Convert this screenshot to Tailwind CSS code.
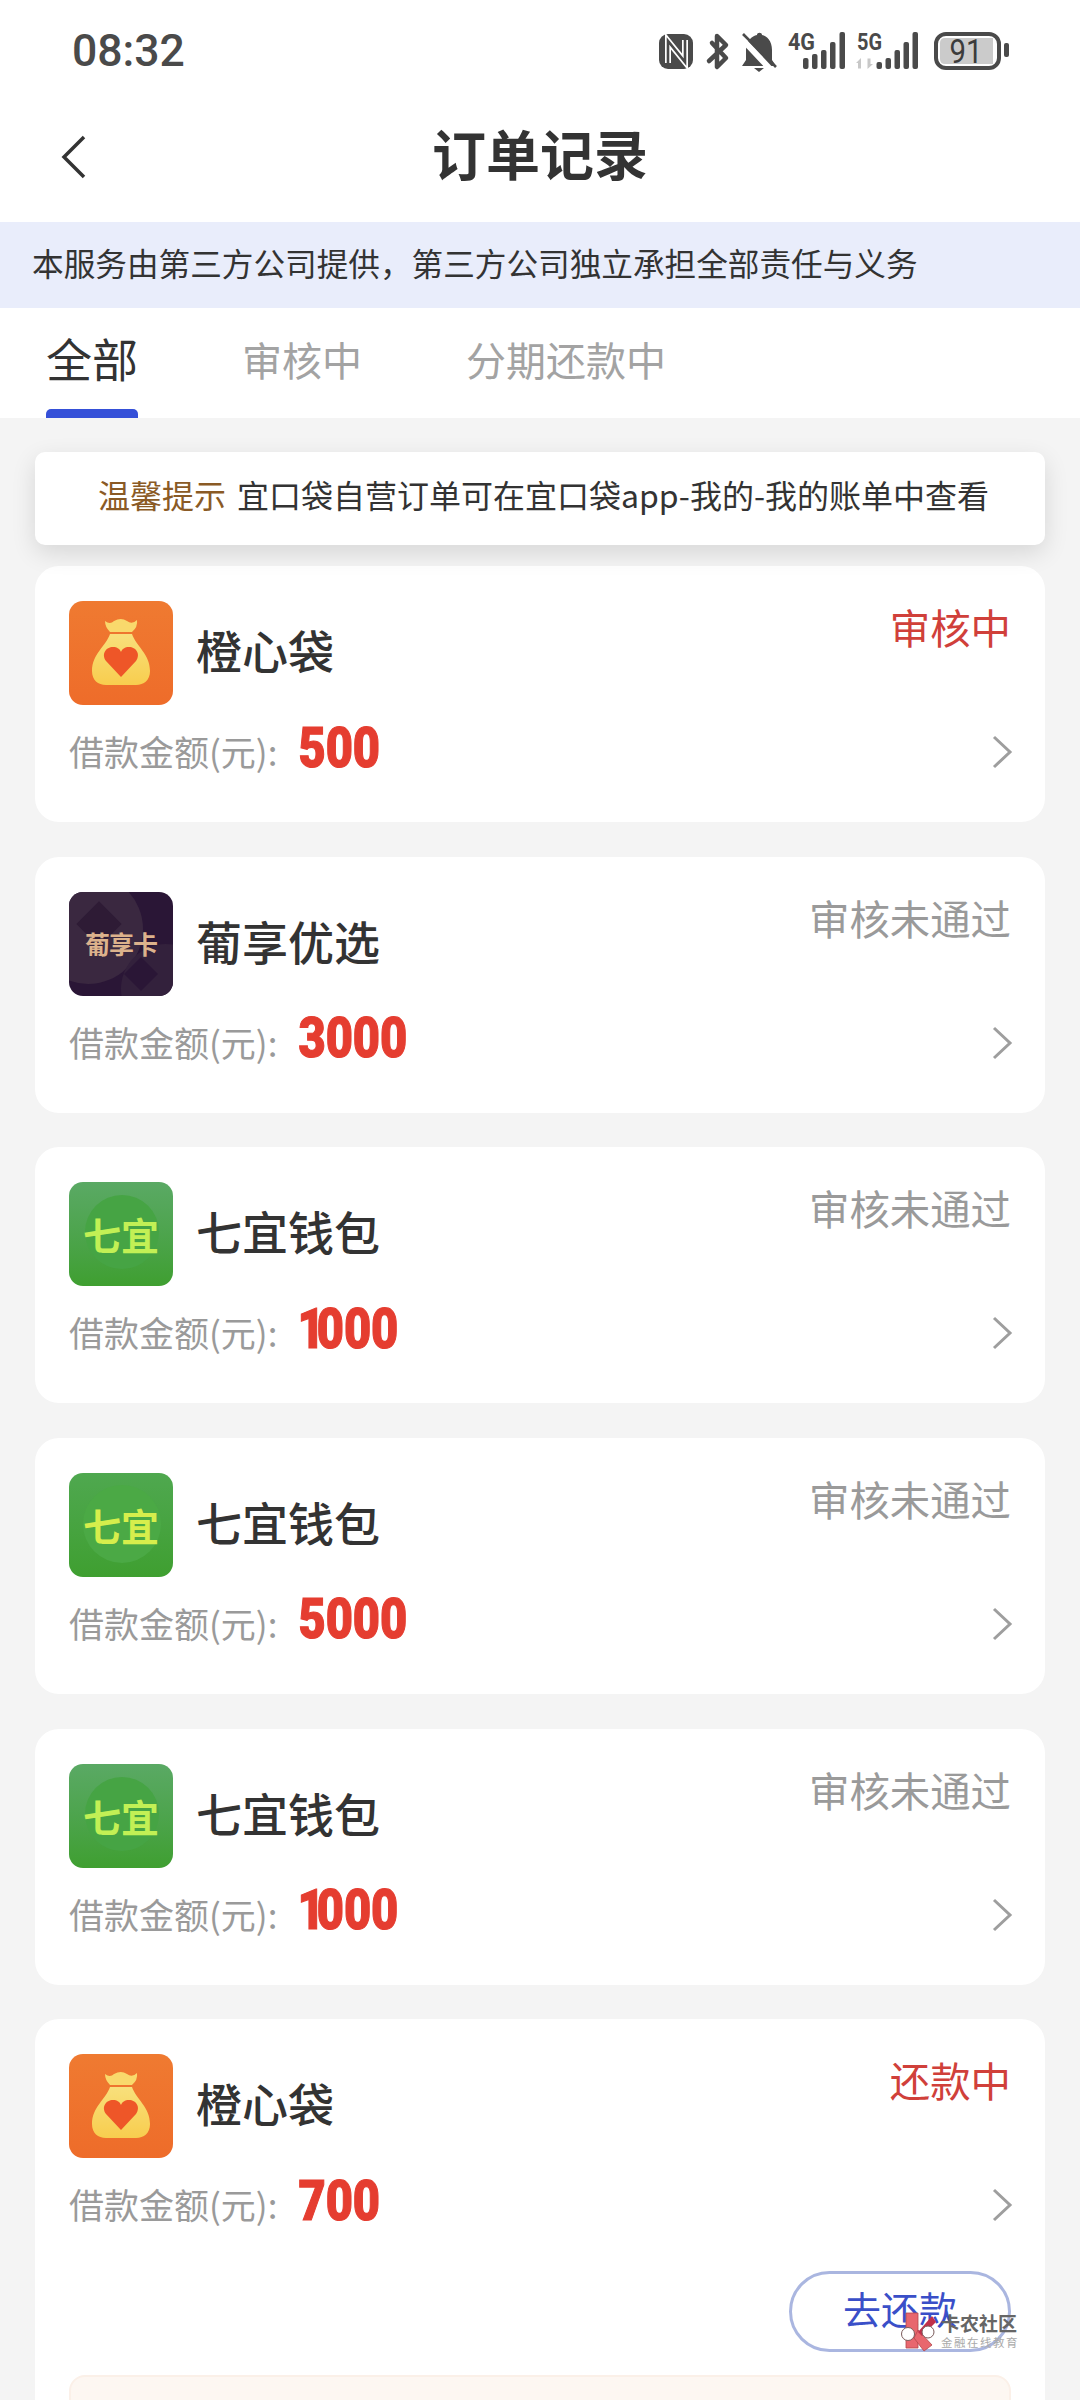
<!doctype html>
<html lang="zh">
<head>
<meta charset="utf-8">
<script src="https://cdn.jsdelivr.net/npm/@tailwindcss/browser@4"></script>
<title>订单记录</title>
</head>
<body class="m-0">
<div class="relative w-[1080px] h-[2400px] overflow-hidden bg-[#f4f4f4] font-['Noto_Sans_CJK_SC','Noto_Sans',sans-serif] text-[#333]">

  <!-- status bar -->
  <div class="h-[85px] bg-white flex justify-between items-start pl-[72px] pr-[67px] pt-[28px]">
    <span class="font-['Roboto',sans-serif] font-medium text-[44.5px] leading-[46px] text-[#4a4a4a]">08:32</span>
    <svg width="358" height="50" viewBox="655 28 358 50" class="block">
      <rect x="659" y="34" width="34" height="35" rx="9" fill="#4a4a4a"/>
      <path d="M668 63V41L685 62V40" fill="none" stroke="#fff" stroke-width="6"/>
      <path d="M668 63V41L685 62V40" fill="none" stroke="#4a4a4a" stroke-width="2.600"/>
      <path d="M712 43L726 58L717 67V36L726 45L709 61" fill="none" stroke="#4a4a4a" stroke-width="4.5" stroke-linejoin="round" stroke-linecap="round"/>
      <path d="M742 66L746 60V50C746 41 752 36 757 35C757 32 762 32 762 35C767 36 772 41 772 50V60L776 66Z" fill="#4a4a4a"/>
      <path d="M754 68H764L759 72Z" fill="#4a4a4a"/>
      <path d="M741 38L772 71" stroke="#fff" stroke-width="6"/>
      <path d="M743 34L776 67" stroke="#4a4a4a" stroke-width="2.6"/>
      <text x="788" y="50" font-family="Roboto" font-weight="700" font-size="24" fill="#4a4a4a" textLength="27" lengthAdjust="spacingAndGlyphs">4G</text>
      <g fill="#4a4a4a">
        <rect x="803" y="58" width="5.5" height="11" rx="2"/><rect x="812" y="54" width="5.5" height="15" rx="2"/><rect x="821" y="50" width="5.5" height="19" rx="2"/><rect x="830" y="42" width="5.5" height="27" rx="2"/><rect x="839.500" y="32" width="5.5" height="37" rx="2"/>
      </g>
      <text x="857" y="50" font-family="Roboto" font-weight="700" font-size="24" fill="#4a4a4a" textLength="25" lengthAdjust="spacingAndGlyphs">5G</text>
      <path d="M856 63L861 58V68.500H858V63ZM873 64L867.500 69V58.500H870.500V64Z" fill="#c8c8c8"/>
      <g fill="#4a4a4a">
        <rect x="876.500" y="62" width="5.5" height="7" rx="2"/><rect x="885.500" y="58" width="5.5" height="11" rx="2"/><rect x="894.500" y="50" width="5.5" height="19" rx="2"/><rect x="903.500" y="42" width="5.5" height="27" rx="2"/><rect x="912.500" y="32" width="5.5" height="37" rx="2"/>
      </g>
      <rect x="936" y="34" width="63" height="34" rx="10" fill="#fff" stroke="#4a4a4a" stroke-width="4"/>
      <path d="M945 38H993V64H945Q940 64 940 59V43Q940 38 945 38Z" fill="#cbcbcb"/>
      <text x="966" y="63" text-anchor="middle" font-family="Roboto" font-size="34" fill="#3c3c3c" textLength="33" lengthAdjust="spacingAndGlyphs">91</text>
      <rect x="1004" y="43" width="5" height="14" rx="2" fill="#4a4a4a"/>
    </svg>
  </div>

  <!-- header -->
  <div class="relative h-[137px] bg-white flex items-center justify-center pb-[2px]">
    <svg width="26" height="44" viewBox="0 0 26 44" class="absolute left-[61px] top-[50px]">
      <path d="M23 2L3 22L23 42" fill="none" stroke="#333" stroke-width="3.500"/>
    </svg>
    <span class="text-[54px] leading-[64px] font-bold text-[#333]">订单记录</span>
  </div>

  <!-- banner -->
  <div class="h-[86px] bg-[#e9edfb] flex items-center pl-[32px] pb-[4px] text-[31.64px] text-[#333] leading-none">本服务由第三方公司提供，第三方公司独立承担全部责任与义务</div>

  <!-- tabs -->
  <div class="h-[110px] bg-white flex items-start pl-[46px]">
    <div class="h-full flex flex-col justify-between items-center">
      <span class="text-[46px] leading-[60px] mt-[19px] text-[#333]">全部</span>
      <span class="block w-[92px] h-[9px] bg-[#3550d8] rounded-t-[5px]"></span>
    </div>
    <span class="ml-[104px] mt-[23px] text-[40px] leading-[56px] text-[#a3a3a3]">审核中</span>
    <span class="ml-[104px] mt-[23px] text-[40px] leading-[56px] text-[#a3a3a3]">分期还款中</span>
  </div>

  <!-- list -->
  <div class="px-[35px] pt-[34px] flex flex-col">
    <div class="h-[93px] bg-white rounded-[10px] shadow-[0_8px_24px_rgba(0,0,0,0.12)] flex items-center justify-center pb-[9px] pl-[7px] text-[32px] leading-none relative z-10">
      <span class="text-[#8a5a25]">温馨提示</span><span class="ml-[11px] text-[#333]">宜口袋自营订单可在宜口袋app-我的-我的账单中查看</span>
    </div>

    <div class="mt-[21px] flex flex-col gap-[34.67px]">

      <!-- card 1 -->
      <div class="h-[256px] bg-white rounded-[24px] px-[34px] pt-[35px]">
        <div class="flex justify-between items-start">
          <div class="flex items-center gap-[23px]">
            <svg width="104" height="104" viewBox="0 0 104 104" class="block">
              <defs>
                <linearGradient id="o" x1="0" y1="0" x2="0" y2="1"><stop offset="0" stop-color="#ef7a31"/><stop offset="1" stop-color="#ee6c2a"/></linearGradient>
                <linearGradient id="b" x1="0" y1="0" x2="0" y2="1"><stop offset="0" stop-color="#f8e07c"/><stop offset="1" stop-color="#f8cd4e"/></linearGradient>
              </defs>
              <rect width="104" height="104" rx="14" fill="url(#o)"/>
              <path d="M36 20Q41 24 45 20Q52 16 58 20Q63 24 68 19Q69 26 63 31H41Q36 26 36 20Z" fill="#f9d96c"/>
              <path d="M41 33H63C67 45 81 53 81 70C81 79 75 84 67 84H37C29 84 23 79 23 70C23 53 37 45 41 33Z" fill="url(#b)"/>
              <path d="M52 76L37 60C32 53 37 46 44 46C48 46 51 48 52 51C53 48 56 46 60 46C67 46 72 53 67 60Z" fill="#ee5628"/>
            </svg>
            <span class="text-[46px] leading-[60px] font-medium text-[#333] -mt-[8px]">橙心袋</span>
          </div>
          <span class="text-[40.4px] leading-[52px] text-[#d0403a]">审核中</span>
        </div>
        <div class="mt-[18px] h-[58px] flex items-center justify-between">
          <div class="flex items-center">
            <span class="text-[35px] leading-[58px] text-[#9a9a9a] -mt-[2px]">借款金额(元):</span>
            <span class="ml-[21px] inline-block scale-y-[1.17] -mt-[9px] font-['Roboto',sans-serif] font-black text-[47px] leading-[58px] text-[#e53d30] [-webkit-text-stroke:1px_#e53d30]">500</span>
          </div>
          <svg width="22" height="34" viewBox="0 0 22 34" class="block -mr-[2px]"><path d="M3 2L19 17L3 32" fill="none" stroke="#9e9e9e" stroke-width="3"/></svg>
        </div>
      </div>

      <!-- card 2 -->
      <div class="h-[256px] bg-white rounded-[24px] px-[34px] pt-[35px]">
        <div class="flex justify-between items-start">
          <div class="flex items-center gap-[23px]">
            <div class="relative w-[104px] h-[104px] rounded-[14px] overflow-hidden bg-[#2a1636] flex items-center justify-center">
              <span class="absolute -left-[36px] -top-[18px] w-[110px] h-[110px] rounded-full bg-[#3a2840]"></span>
              <span class="absolute left-[52px] top-[52px] w-[90px] h-[90px] rounded-full bg-[#33213c]"></span>
              <span class="absolute left-[14px] top-[16px] w-[32px] h-[32px] rotate-45 bg-[#2e1b35]"></span>
              <span class="absolute left-[60px] top-[70px] w-[24px] h-[24px] rotate-45 bg-[#2a1636]"></span>
              <span class="relative text-[25px] leading-none font-bold tracking-[-1px] text-[#dcb28c] whitespace-nowrap">葡享卡</span>
            </div>
            <span class="text-[46px] leading-[60px] font-medium text-[#333] -mt-[8px]">葡享优选</span>
          </div>
          <span class="text-[40.4px] leading-[52px] text-[#9a9a9a]">审核未通过</span>
        </div>
        <div class="mt-[18px] h-[58px] flex items-center justify-between">
          <div class="flex items-center">
            <span class="text-[35px] leading-[58px] text-[#9a9a9a] -mt-[2px]">借款金额(元):</span>
            <span class="ml-[21px] inline-block scale-y-[1.17] -mt-[9px] font-['Roboto',sans-serif] font-black text-[47px] leading-[58px] text-[#e53d30] [-webkit-text-stroke:1px_#e53d30]">3000</span>
          </div>
          <svg width="22" height="34" viewBox="0 0 22 34" class="block -mr-[2px]"><path d="M3 2L19 17L3 32" fill="none" stroke="#9e9e9e" stroke-width="3"/></svg>
        </div>
      </div>

      <!-- card 3 -->
      <div class="h-[256px] bg-white rounded-[24px] px-[34px] pt-[35px]">
        <div class="flex justify-between items-start">
          <div class="flex items-center gap-[23px]">
            <div class="relative w-[104px] h-[104px] rounded-[14px] overflow-hidden bg-gradient-to-b from-[#5aa964] to-[#3f9f30] flex items-center justify-center">
              <span class="absolute left-[16px] top-[13px] w-[74px] h-[74px] rounded-full bg-[#46a444]"></span>
              <span class="relative text-[38px] leading-none font-bold text-[#c2f055] whitespace-nowrap">七宜</span>
            </div>
            <span class="text-[46px] leading-[60px] font-medium text-[#333] -mt-[8px]">七宜钱包</span>
          </div>
          <span class="text-[40.4px] leading-[52px] text-[#9a9a9a]">审核未通过</span>
        </div>
        <div class="mt-[18px] h-[58px] flex items-center justify-between">
          <div class="flex items-center">
            <span class="text-[35px] leading-[58px] text-[#9a9a9a] -mt-[2px]">借款金额(元):</span>
            <span class="ml-[20px] inline-block scale-y-[1.17] -mt-[9px] font-['Roboto',sans-serif] font-black text-[47px] leading-[58px] text-[#e53d30] [-webkit-text-stroke:1px_#e53d30]"><span class="tracking-[-8px]">1</span>000</span>
          </div>
          <svg width="22" height="34" viewBox="0 0 22 34" class="block -mr-[2px]"><path d="M3 2L19 17L3 32" fill="none" stroke="#9e9e9e" stroke-width="3"/></svg>
        </div>
      </div>

      <!-- card 4 -->
      <div class="h-[256px] bg-white rounded-[24px] px-[34px] pt-[35px]">
        <div class="flex justify-between items-start">
          <div class="flex items-center gap-[23px]">
            <div class="relative w-[104px] h-[104px] rounded-[14px] overflow-hidden bg-gradient-to-b from-[#4fa84f] to-[#3f9f30] flex items-center justify-center">
              <span class="absolute left-[14px] top-[12px] w-[78px] h-[78px] rounded-full bg-[#4ba945]"></span>
              <span class="relative text-[38px] leading-none font-bold text-[#d6ee4c] whitespace-nowrap">七宜</span>
            </div>
            <span class="text-[46px] leading-[60px] font-medium text-[#333] -mt-[8px]">七宜钱包</span>
          </div>
          <span class="text-[40.4px] leading-[52px] text-[#9a9a9a]">审核未通过</span>
        </div>
        <div class="mt-[18px] h-[58px] flex items-center justify-between">
          <div class="flex items-center">
            <span class="text-[35px] leading-[58px] text-[#9a9a9a] -mt-[2px]">借款金额(元):</span>
            <span class="ml-[21px] inline-block scale-y-[1.17] -mt-[9px] font-['Roboto',sans-serif] font-black text-[47px] leading-[58px] text-[#e53d30] [-webkit-text-stroke:1px_#e53d30]">5000</span>
          </div>
          <svg width="22" height="34" viewBox="0 0 22 34" class="block -mr-[2px]"><path d="M3 2L19 17L3 32" fill="none" stroke="#9e9e9e" stroke-width="3"/></svg>
        </div>
      </div>

      <!-- card 5 -->
      <div class="h-[256px] bg-white rounded-[24px] px-[34px] pt-[35px]">
        <div class="flex justify-between items-start">
          <div class="flex items-center gap-[23px]">
            <div class="relative w-[104px] h-[104px] rounded-[14px] overflow-hidden bg-gradient-to-b from-[#5aa964] to-[#3f9f30] flex items-center justify-center">
              <span class="absolute left-[16px] top-[13px] w-[74px] h-[74px] rounded-full bg-[#46a444]"></span>
              <span class="relative text-[38px] leading-none font-bold text-[#c2f055] whitespace-nowrap">七宜</span>
            </div>
            <span class="text-[46px] leading-[60px] font-medium text-[#333] -mt-[8px]">七宜钱包</span>
          </div>
          <span class="text-[40.4px] leading-[52px] text-[#9a9a9a]">审核未通过</span>
        </div>
        <div class="mt-[18px] h-[58px] flex items-center justify-between">
          <div class="flex items-center">
            <span class="text-[35px] leading-[58px] text-[#9a9a9a] -mt-[2px]">借款金额(元):</span>
            <span class="ml-[20px] inline-block scale-y-[1.17] -mt-[9px] font-['Roboto',sans-serif] font-black text-[47px] leading-[58px] text-[#e53d30] [-webkit-text-stroke:1px_#e53d30]"><span class="tracking-[-8px]">1</span>000</span>
          </div>
          <svg width="22" height="34" viewBox="0 0 22 34" class="block -mr-[2px]"><path d="M3 2L19 17L3 32" fill="none" stroke="#9e9e9e" stroke-width="3"/></svg>
        </div>
      </div>

      <!-- card 6 -->
      <div class="bg-white rounded-[24px] px-[34px] pt-[35px] pb-[40px]">
        <div class="flex justify-between items-start">
          <div class="flex items-center gap-[23px]">
            <svg width="104" height="104" viewBox="0 0 104 104" class="block">
              <rect width="104" height="104" rx="14" fill="url(#o)"/>
              <path d="M36 20Q41 24 45 20Q52 16 58 20Q63 24 68 19Q69 26 63 31H41Q36 26 36 20Z" fill="#f9d96c"/>
              <path d="M41 33H63C67 45 81 53 81 70C81 79 75 84 67 84H37C29 84 23 79 23 70C23 53 37 45 41 33Z" fill="url(#b)"/>
              <path d="M52 76L37 60C32 53 37 46 44 46C48 46 51 48 52 51C53 48 56 46 60 46C67 46 72 53 67 60Z" fill="#ee5628"/>
            </svg>
            <span class="text-[46px] leading-[60px] font-medium text-[#333] -mt-[8px]">橙心袋</span>
          </div>
          <span class="text-[40.4px] leading-[52px] text-[#d0403a]">还款中</span>
        </div>
        <div class="mt-[18px] h-[58px] flex items-center justify-between">
          <div class="flex items-center">
            <span class="text-[35px] leading-[58px] text-[#9a9a9a] -mt-[2px]">借款金额(元):</span>
            <span class="ml-[21px] inline-block scale-y-[1.17] -mt-[9px] font-['Roboto',sans-serif] font-black text-[47px] leading-[58px] text-[#e53d30] [-webkit-text-stroke:1px_#e53d30]">700</span>
          </div>
          <svg width="22" height="34" viewBox="0 0 22 34" class="block -mr-[2px]"><path d="M3 2L19 17L3 32" fill="none" stroke="#9e9e9e" stroke-width="3"/></svg>
        </div>
        <div class="mt-[37px] flex justify-end">
          <div class="w-[222px] h-[81px] rounded-full border-[3px] border-[#aab6e0] flex items-center justify-center pb-[8px] text-[38px] leading-none text-[#3a4fc8]">去还款</div>
        </div>
        <div class="mt-[23px] h-[200px] rounded-[16px] bg-[#fdf7f2] border-2 border-[#fbf0e8]"></div>
      </div>

    </div>
  </div>

  <!-- watermark -->
  <div class="absolute left-[900px] top-[2310px] flex items-center gap-[3px]">
    <svg width="38" height="42" viewBox="0 0 38 42" class="block">
      <path d="M6 3H18V38H6Z" fill="#e8676e" stroke="#b2474c" stroke-width="0.800"/>
      <path d="M18 20L32 35L24 41L14 28Z" fill="#e8676e" stroke="#b2474c" stroke-width="0.800"/>
      <path d="M18 22L32 6L36 12L22 26Z" fill="#c0304a"/>
      <circle cx="8" cy="24" r="6.500" fill="#fff" stroke="#7a5a5a" stroke-width="1"/>
      <circle cx="28" cy="22" r="6" fill="#fff" stroke="#7a5a5a" stroke-width="1"/>
    </svg>
    <div class="flex flex-col items-start">
      <span class="text-[19px] leading-[22px] font-bold text-[#666] whitespace-nowrap">卡农社区</span>
      <span class="text-[11.500px] leading-[16px] tracking-[1.500px] text-[#aaa] whitespace-nowrap">金融在线教育</span>
    </div>
  </div>
</div>
</body>
</html>
